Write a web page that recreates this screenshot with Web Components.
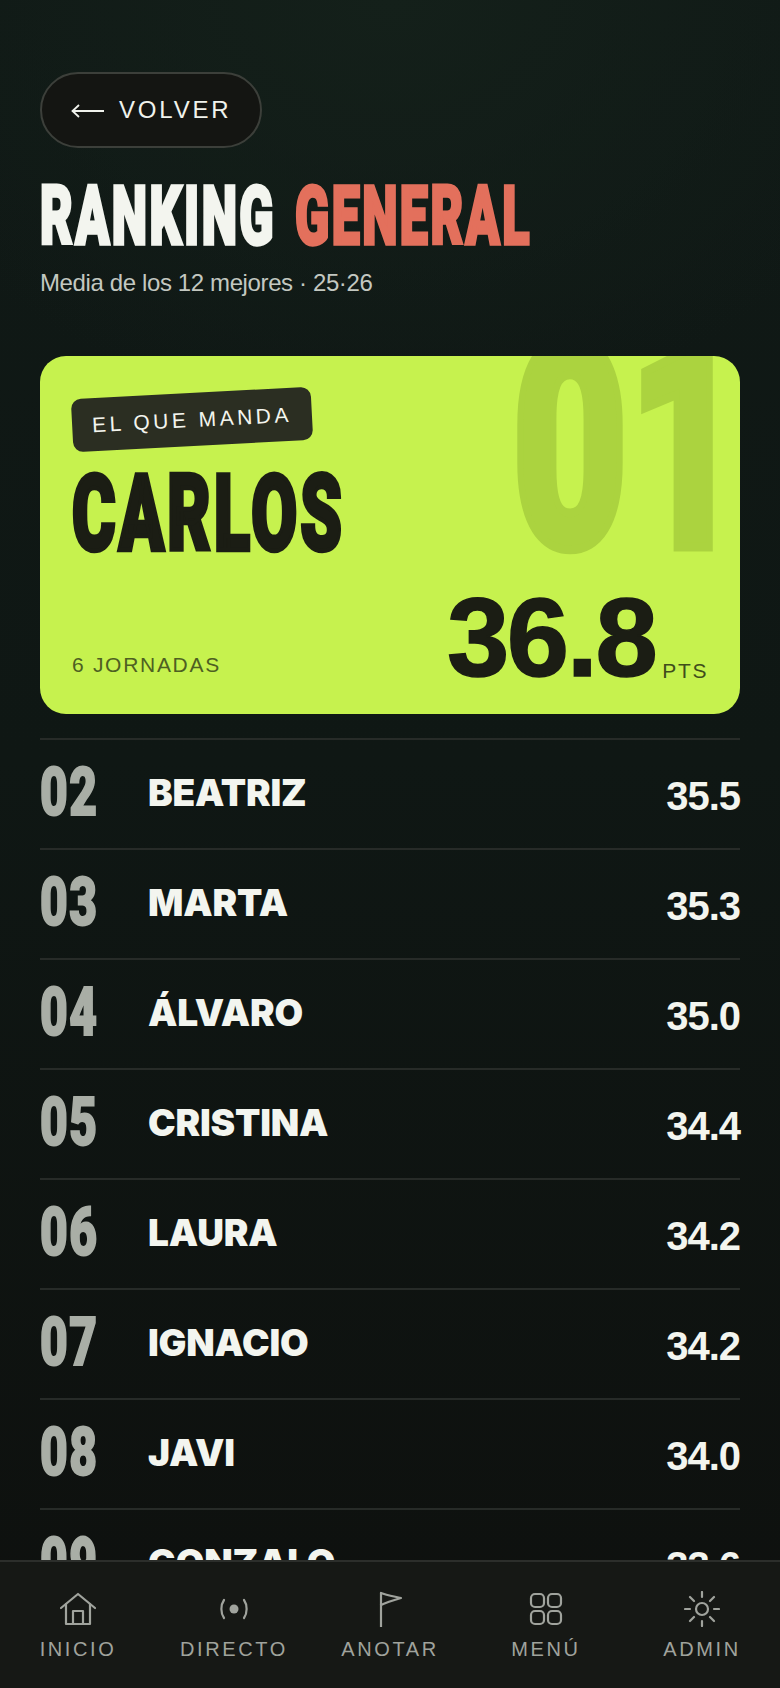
<!DOCTYPE html>
<html lang="es">
<head>
<meta charset="utf-8">
<title>Ranking general</title>
<style>
    html, body { margin: 0; height: 100%; background: #0e100e; }
    body { font-family: "Liberation Sans", Arial, sans-serif; }
</style>
</head>
<body>
<app-screen>
    <back-button>VOLVER</back-button>
    <page-title sub="Media de los 12 mejores · 25·26"></page-title>
    <leader-card name="CARLOS" tag="EL QUE MANDA" rounds="6 JORNADAS" score="36.8" pos="01"></leader-card>
    <rank-list></rank-list>
    <bottom-nav slot="nav"></bottom-nav>
</app-screen>

<script>
// Heavy condensed text. No Anton here, so squeeze Roboto Black horizontally and thicken it.
class CondText extends HTMLElement {
    connectedCallback() {
        const sx = this.getAttribute('sx') || 0.6;
        const stroke = this.getAttribute('stroke') || 0;
        const track = this.getAttribute('track') || 0;
        this.attachShadow({ mode: 'open' }).innerHTML = `
            <style>
                :host {
                    display: inline-block;
                    font-family: Roboto, "Liberation Sans", sans-serif;
                    font-weight: 900;
                    white-space: nowrap;
                }
                span {
                    display: inline-block;
                    transform: scaleX(${sx});
                    transform-origin: left center;
                    letter-spacing: ${track}px;
                    -webkit-text-stroke: ${stroke}px currentColor;
                }
            </style>
            <span><slot></slot></span>
        `;
    }
}
customElements.define('cond-text', CondText);

class AppScreen extends HTMLElement {
    connectedCallback() {
        this.attachShadow({ mode: 'open' }).innerHTML = `
            <style>
                :host {
                    display: flex;
                    flex-direction: column;
                    height: 1688px;
                    overflow: hidden;
                    background:
                        radial-gradient(ellipse 70% 420px at 50% 0, #14201a 0%, rgba(20, 32, 26, 0) 100%),
                        linear-gradient(180deg, #101916 0%, #0f1714 45%, #0e100e 100%);
                }
                main {
                    flex: 1;
                    min-height: 0;
                    overflow: hidden;
                    padding: 72px 40px 0;
                    display: flex;
                    flex-direction: column;
                    align-items: stretch;
                }
                ::slotted(*) { flex: none; }
            </style>
            <main><slot></slot></main>
            <slot name="nav"></slot>
        `;
    }
}
customElements.define('app-screen', AppScreen);

class BackButton extends HTMLElement {
    connectedCallback() {
        this.attachShadow({ mode: 'open' }).innerHTML = `
            <style>
                :host {
                    display: flex;
                    align-items: center;
                    gap: 15px;
                    align-self: flex-start;
                    box-sizing: border-box;
                    width: 222px;
                    height: 76px;
                    padding-left: 29px;
                    border: 2px solid #3c3f3a;
                    border-radius: 38px;
                    background: #141512;
                    color: #f0f2ec;
                    font-size: 24px;
                    letter-spacing: 2.8px;
                }
                svg { display: block; }
            </style>
            <svg width="33" height="16" viewBox="0 0 33 16" fill="none" stroke="currentColor" stroke-width="1.8">
                <path d="M1 9H33M8 3L1.5 9L8 15"/>
            </svg>
            <slot></slot>
        `;
    }
}
customElements.define('back-button', BackButton);

class PageTitle extends HTMLElement {
    connectedCallback() {
        this.attachShadow({ mode: 'open' }).innerHTML = `
            <style>
                :host { display: block; margin-top: 30px; }
                h1 {
                    display: flex;
                    gap: 22px;
                    margin: 0;
                    height: 76px;
                    align-items: center;
                    font-size: 82px;
                    font-weight: 900;
                    line-height: 76px;
                    color: #f3f5ef;
                    letter-spacing: 0;
                }
                .first { width: 233px; }
                .second { width: 234px; color: #e3705c; }
                p {
                    margin: 14px 0 0;
                    font-size: 24px;
                    line-height: 30px;
                    color: #c3c8c1;
                    letter-spacing: -0.38px;
                }
            </style>
            <h1>
                <cond-text class="first" sx="0.612" stroke="3.5" track="4">RANKING</cond-text>
                <cond-text class="second" sx="0.612" stroke="3.5" track="4">GENERAL</cond-text>
            </h1>
            <p>${this.getAttribute('sub')}</p>
        `;
    }
}
customElements.define('page-title', PageTitle);

class LeaderCard extends HTMLElement {
    connectedCallback() {
        const a = (n) => this.getAttribute(n);
        this.attachShadow({ mode: 'open' }).innerHTML = `
            <style>
                :host {
                    display: block;
                    position: relative;
                    box-sizing: border-box;
                    height: 358px;
                    margin-top: 58px;
                    padding: 37px 32px 0;
                    border-radius: 26px;
                    background: #c6f24e;
                    color: #1b1d14;
                    overflow: hidden;
                }
                .ghost {
                    position: absolute;
                    left: 472px;
                    top: -18px;
                    font-size: 290px;
                    line-height: 220px;
                    color: #abd33f;
                }
                .tag {
                    position: relative;
                    box-sizing: border-box;
                    width: 240px;
                    height: 53px;
                    line-height: 53px;
                    text-align: center;
                    border-radius: 10px;
                    background: #2b2e22;
                    color: #f3f5ee;
                    font-size: 21px;
                    letter-spacing: 3.5px;
                    transform: rotate(-3deg);
                    white-space: nowrap;
                }
                .name {
                    position: relative;
                    display: block;
                    width: 270px;
                    margin-top: 19px;
                    font-size: 105px;
                    line-height: 100px;
                }
                .foot {
                    position: absolute;
                    left: 32px;
                    right: 32px;
                    bottom: 0;
                    height: 140px;
                    display: flex;
                    align-items: flex-end;
                    justify-content: space-between;
                }
                .rounds {
                    font-size: 21px;
                    line-height: 24px;
                    letter-spacing: 1.7px;
                    color: #4e5f22;
                    margin-bottom: 37px;
                }
                .score { display: flex; align-items: flex-end; gap: 7px; }
                .value {
                    font-size: 112px;
                    font-weight: 700;
                    line-height: 118px;
                    letter-spacing: -2.4px;
                    margin-bottom: 17px;
                    -webkit-text-stroke: 1.5px currentColor;
                }
                .pts {
                    font-size: 21px;
                    line-height: 24px;
                    letter-spacing: 1.6px;
                    color: #3f4d1b;
                    margin-bottom: 31px;
                }
            </style>
            <cond-text class="ghost" sx="0.69" stroke="9">${a('pos')}</cond-text>
            <div class="tag">${a('tag')}</div>
            <cond-text class="name" sx="0.634" stroke="4.5" track="5">${a('name')}</cond-text>
            <div class="foot">
                <div class="rounds">${a('rounds')}</div>
                <div class="score">
                    <span class="value">${a('score')}</span>
                    <span class="pts">PTS</span>
                </div>
            </div>
        `;
    }
}
customElements.define('leader-card', LeaderCard);

class RankRow extends HTMLElement {
    connectedCallback() {
        const a = (n) => this.getAttribute(n);
        this.attachShadow({ mode: 'open' }).innerHTML = `
            <style>
                :host {
                    display: flex;
                    align-items: center;
                    box-sizing: border-box;
                    height: 110px;
                    border-top: 2px solid #272b28;
                    color: #f3f5ef;
                }
                .pos {
                    width: 108px;
                    flex: none;
                    font-size: 66px;
                    line-height: 70px;
                    color: #a9aea6;
                    margin-bottom: 3px;
                }
                .name {
                    flex: 1;
                    font-family: Inter, "Liberation Sans", sans-serif;
                    font-size: 37px;
                    font-weight: 900;
                    letter-spacing: -0.2px;
                    line-height: 44px;
                    margin-bottom: 2px;
                }
                .score {
                    font-size: 40px;
                    font-weight: 700;
                    letter-spacing: -1px;
                    line-height: 44px;
                    margin-top: 4px;
                }
            </style>
            <cond-text class="pos" sx="0.726" stroke="2" track="2">${a('pos')}</cond-text>
            <div class="name">${a('name')}</div>
            <div class="score">${a('score')}</div>
        `;
    }
}
customElements.define('rank-row', RankRow);

const RANKING = [
    ['02', 'BEATRIZ', '35.5'],
    ['03', 'MARTA', '35.3'],
    ['04', 'ÁLVARO', '35.0'],
    ['05', 'CRISTINA', '34.4'],
    ['06', 'LAURA', '34.2'],
    ['07', 'IGNACIO', '34.2'],
    ['08', 'JAVI', '34.0'],
    ['09', 'GONZALO', '33.6'],
];

class RankList extends HTMLElement {
    connectedCallback() {
        const rows = RANKING.map(([pos, name, score]) =>
            `<rank-row pos="${pos}" name="${name}" score="${score}"></rank-row>`).join('');
        this.attachShadow({ mode: 'open' }).innerHTML = `
            <style>:host { display: block; margin-top: 24px; }</style>
            ${rows}
        `;
    }
}
customElements.define('rank-list', RankList);

const ICONS = {
    home: '<path d="M1 17L18 3L35 17"/><path d="M6 13V33H30V13"/><path d="M13 33V20H23V33"/>',
    live: '<circle cx="18" cy="18" r="4.5" fill="currentColor" stroke="none"/><path d="M8 9C4.5 14 4.5 22 8 27"/><path d="M28 9C31.500 14 31.500 22 28 27"/>',
    flag: '<path d="M9 36V2"/><path d="M9 2C14 4 20 5 29 7C22 9 15 11 9 14"/>',
    grid: '<rect x="3" y="3" width="13" height="13" rx="4"/><rect x="20" y="3" width="13" height="13" rx="4"/><rect x="3" y="20" width="13" height="13" rx="4"/><rect x="20" y="20" width="13" height="13" rx="4"/>',
    sun: '<circle cx="18" cy="18" r="6"/><path d="M18 1V6M18 30V35M1 18H6M30 18H35M6 6L10 10M26 26L30 30M30 6L26 10M10 26L6 30"/>',
};

class NavItem extends HTMLElement {
    connectedCallback() {
        this.attachShadow({ mode: 'open' }).innerHTML = `
            <style>
                :host {
                    display: flex;
                    flex-direction: column;
                    align-items: center;
                    gap: 10px;
                    color: #a0a39d;
                    font-size: 20px;
                    line-height: 24px;
                    letter-spacing: 2.6px;
                }
                svg { display: block; }
            </style>
            <svg width="36" height="36" viewBox="0 0 36 36" fill="none" stroke="currentColor" stroke-width="2.2" stroke-linecap="round" stroke-linejoin="round">
                ${ICONS[this.getAttribute('icon')]}
            </svg>
            <span><slot></slot></span>
        `;
    }
}
customElements.define('nav-item', NavItem);

class BottomNav extends HTMLElement {
    connectedCallback() {
        this.attachShadow({ mode: 'open' }).innerHTML = `
            <style>
                :host {
                    display: grid;
                    grid-template-columns: repeat(5, 1fr);
                    flex: none;
                    box-sizing: border-box;
                    height: 128px;
                    padding-top: 29px;
                    border-top: 2px solid #2c2e2b;
                    background: #161815;
                }
            </style>
            <nav-item icon="home">INICIO</nav-item>
            <nav-item icon="live">DIRECTO</nav-item>
            <nav-item icon="flag">ANOTAR</nav-item>
            <nav-item icon="grid">MENÚ</nav-item>
            <nav-item icon="sun">ADMIN</nav-item>
        `;
    }
}
customElements.define('bottom-nav', BottomNav);
</script>
</body>
</html>
